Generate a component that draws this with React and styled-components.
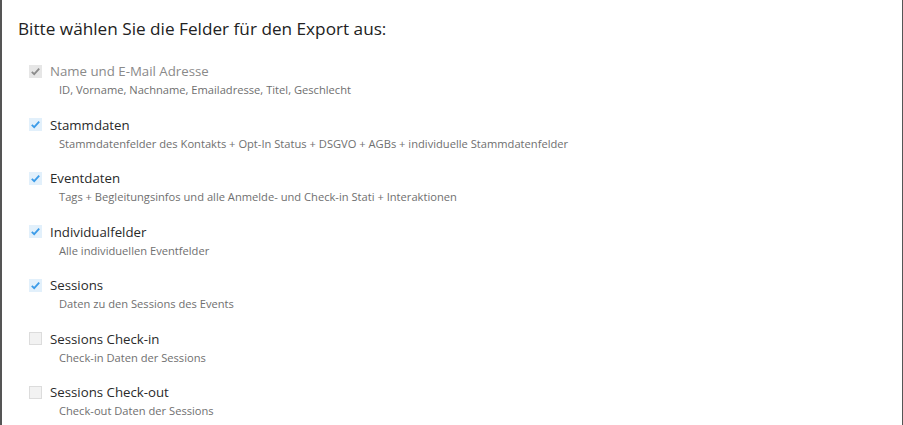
import React from "react";
import styled, { createGlobalStyle } from "styled-components";

const GlobalStyle = createGlobalStyle`
  html, body {
    margin: 0;
    padding: 0;
    background: #ffffff;
  }
  body {
    font-family: "Open Sans", "Liberation Sans", Arial, sans-serif;
  }
`;

const fields = [
  { label: "Name und E-Mail Adresse", desc: "ID, Vorname, Nachname, Emailadresse, Titel, Geschlecht", state: "locked" },
  { label: "Stammdaten", desc: "Stammdatenfelder des Kontakts + Opt-In Status + DSGVO + AGBs + individuelle Stammdatenfelder", state: "checked" },
  { label: "Eventdaten", desc: "Tags + Begleitungsinfos und alle Anmelde- und Check-in Stati + Interaktionen", state: "checked" },
  { label: "Individualfelder", desc: "Alle individuellen Eventfelder", state: "checked" },
  { label: "Sessions", desc: "Daten zu den Sessions des Events", state: "checked" },
  { label: "Sessions Check-in", desc: "Check-in Daten der Sessions", state: "empty" },
  { label: "Sessions Check-out", desc: "Check-out Daten der Sessions", state: "empty" },
];

const Panel = styled.div`
  box-sizing: border-box;
  height: 425px;
  border-left: 2px solid #555;
  border-right: 1px solid #555;
  padding: 18px 16px 0 16px;
  overflow: hidden;
`;

const Title = styled.h2`
  margin: 0 0 22px 0;
  font-size: 17.2px;
  font-weight: 400;
  color: #222;
  line-height: 22px;
`;

const List = styled.div`
  display: flex;
  flex-direction: column;
  gap: 17.5px;
  padding-left: 11px;
`;

const Row = styled.label`
  display: grid;
  grid-template-columns: 13px 1fr;
  column-gap: 8px;
  row-gap: 2px;
  align-items: center;
`;

const Box = styled.span`
  box-sizing: border-box;
  width: 13px;
  height: 13px;
  display: flex;
  align-items: center;
  justify-content: center;
  background: ${(p) => (p.$state === "checked" ? "#e2f0fb" : p.$state === "locked" ? "#e6e6e6" : "#f2f2f2")};
  border: 1px solid ${(p) => (p.$state === "checked" ? "#e2f0fb" : p.$state === "locked" ? "#e6e6e6" : "#dcdcdc")};
  svg {
    display: block;
  }
`;

const Label = styled.span`
  font-size: 13.25px;
  line-height: 18px;
  color: ${(p) => (p.$muted ? "#8a8a8a" : "#2a2a2a")};
`;

const Desc = styled.span`
  grid-column: 2;
  padding-left: 9px;
  font-size: 11.15px;
  line-height: 16px;
  color: #6f6f6f;
`;

const Check = ({ color }) => (
  <svg width="11" height="11" viewBox="0 0 11 11">
    <path d="M1.8 5.8 L4.2 8.2 L9.2 2.6" fill="none" stroke={color} strokeWidth="1.8" />
  </svg>
);

const FieldRow = ({ label, desc, state }) => (
  <Row>
    <Box $state={state}>
      {state === "checked" && <Check color="#3b9be8" />}
      {state === "locked" && <Check color="#8c8c8c" />}
    </Box>
    <Label $muted={state === "locked"}>{label}</Label>
    <Desc>{desc}</Desc>
  </Row>
);

export default function App() {
  return (
    <>
      <GlobalStyle />
      <Panel>
        <Title>Bitte wählen Sie die Felder für den Export aus:</Title>
        <List>
          {fields.map((f) => (
            <FieldRow key={f.label} {...f} />
          ))}
        </List>
      </Panel>
    </>
  );
}
